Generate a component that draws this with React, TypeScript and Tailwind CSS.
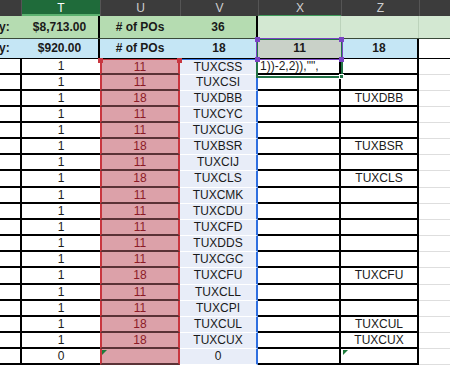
const FONT = { fontFamily: '"Liberation Sans Narrow", "Liberation Sans", Arial, sans-serif' }

type Row = { code: string; u: string; t: string; z: string }

const ROWS: Row[] = [
  { code: 'TUXCSS', u: '11', t: '1', z: '' },
  { code: 'TUXCSI', u: '11', t: '1', z: '' },
  { code: 'TUXDBB', u: '18', t: '1', z: 'TUXDBB' },
  { code: 'TUXCYC', u: '11', t: '1', z: '' },
  { code: 'TUXCUG', u: '11', t: '1', z: '' },
  { code: 'TUXBSR', u: '18', t: '1', z: 'TUXBSR' },
  { code: 'TUXCIJ', u: '11', t: '1', z: '' },
  { code: 'TUXCLS', u: '18', t: '1', z: 'TUXCLS' },
  { code: 'TUXCMK', u: '11', t: '1', z: '' },
  { code: 'TUXCDU', u: '11', t: '1', z: '' },
  { code: 'TUXCFD', u: '11', t: '1', z: '' },
  { code: 'TUXDDS', u: '11', t: '1', z: '' },
  { code: 'TUXCGC', u: '11', t: '1', z: '' },
  { code: 'TUXCFU', u: '18', t: '1', z: 'TUXCFU' },
  { code: 'TUXCLL', u: '11', t: '1', z: '' },
  { code: 'TUXCPI', u: '11', t: '1', z: '' },
  { code: 'TUXCUL', u: '18', t: '1', z: 'TUXCUL' },
  { code: 'TUXCUX', u: '18', t: '1', z: 'TUXCUX' },
  { code: '0', u: '', t: '0', z: '' },
]

function Handle({ className }: { className: string }) {
  return <div className={`absolute w-[5px] h-[5px] ${className}`} />
}

function Triangle({ className }: { className: string }) {
  return (
    <div
      className={`absolute w-0 h-0 border-t-[5px] border-r-[5px] border-t-[#1e7b3c] border-r-transparent ${className}`}
    />
  )
}

export default function App() {
  return (
    <div className="relative w-[450px] h-[368px] overflow-hidden bg-white text-[12px] text-[#1a1a1a]" style={FONT}>
      {/* column headers */}
      <div className="flex h-[16px] bg-[#3c3c3c] text-[#cfcfcf] text-[12px] leading-[16px]">
        <div className="w-[22px] border-r border-[#555]" />
        <div className="w-[78px] bg-[#1f6b3a] text-white text-center border-b-2 border-[#5cb270]">T</div>
        <div className="w-[80px] text-center border-l border-[#555]">U</div>
        <div className="w-[78px] text-center border-l border-[#555]">V</div>
        <div className="w-[83px] text-center border-l border-[#555] border-b border-b-[#3f9a5a]">X</div>
        <div className="w-[78px] text-center border-l border-[#555]">Z</div>
        <div className="flex-1 border-l border-[#555]" />
      </div>

      {/* summary row 1 */}
      <div className="flex h-[23px] font-bold leading-[22px] border-b border-[#3a4a3a]">
        <div className="flex w-[100px] bg-[#b5dcb1] border-r-2 border-black">
          <div className="w-[22px] -ml-[1px]">y:</div>
          <div className="flex-1 text-center">$8,713.00</div>
        </div>
        <div className="w-[80px] bg-[#b5dcb1] text-center">
          # of POs
        </div>
        <div className="w-[78px] bg-[#b5dcb1] text-center border-r-2 border-black">36</div>
        <div className="w-[83px] bg-[#d3e8d2] border-r border-[#bcd3bb]" />
        <div className="w-[78px] bg-[#d3e8d2] border-r border-[#bcd3bb]" />
        <div className="flex-1 bg-[#d3e8d2]" />
      </div>

      {/* summary row 2 */}
      <div className="flex h-[20px] font-bold leading-[19px] border-b border-black">
        <div className="flex w-[100px] bg-[#c5e6f5] border-r-2 border-black">
          <div className="w-[22px] -ml-[1px]">y:</div>
          <div className="flex-1 text-center">$920.00</div>
        </div>
        <div className="w-[80px] bg-[#c5e6f5] text-center"># of POs</div>
        <div className="w-[78px] bg-[#c5e6f5] text-center">18</div>
        <div className="w-[83px] bg-[#c9d1c8] text-center">11</div>
        <div className="w-[78px] bg-[#c5e6f5] text-center border-r-2 border-black">18</div>
        <div className="flex-1 bg-white" />
      </div>

      {/* data rows */}
      {ROWS.map((r, i) => (
        <div
          key={i}
          className={`flex ${i === 7 || i === 13 ? 'h-[17px] leading-[15px]' : 'h-[16px] leading-[14px]'}`}
        >
          <div className="w-[22px] border-b-2 border-r-2 border-black" />
          <div className="w-[78px] text-center border-b-2 border-black">{r.t}</div>
          <div
            className={`w-[80px] bg-[#dca1a9] text-[#8b1b27] text-center border-x-2 border-x-[#c8363f] border-b-2 border-b-[#5a3236] ${
              i === 0 ? 'border-t border-t-[#c8363f]' : ''
            }`}
          >
            {r.u}
          </div>
          <div
            className={`w-[78px] bg-[#e8edf8] text-center border-b border-b-white border-r-2 border-r-[#2f6fe0] ${
              i === 0 ? 'border-t border-t-[#2f6fe0]' : ''
            }`}
          >
            {r.code}
          </div>
          <div className="w-[83px] border-b-2 border-r-2 border-black pl-[2px] whitespace-nowrap overflow-hidden">
            {i === 0 ? '1))-2,2)),"",' : ''}
          </div>
          <div className="w-[78px] text-center border-b-2 border-r-2 border-black">{r.z}</div>
          <div className="flex-1 border-b border-[#dedede]" />
        </div>
      ))}

      {/* selection overlays */}
      <div className="absolute left-[256px] top-[38px] w-[87px] h-[40px] border-2 border-[#217346] pointer-events-none" />
      <div className="absolute left-[256px] top-[38px] w-[87px] h-[22px] border border-[#7a45c4] pointer-events-none" />
      <Handle className="left-[255px] top-[37px] bg-[#7a45c4]" />
      <Handle className="left-[339px] top-[37px] bg-[#7a45c4]" />
      <Handle className="left-[255px] top-[57px] bg-[#7a45c4]" />
      <Handle className="left-[339px] top-[57px] bg-[#7a45c4]" />
      <Handle className="left-[339px] top-[74px] bg-[#217346] border border-white" />
      <Handle className="left-[98px] top-[58px] bg-[#c8363f]" />
      <Handle className="left-[177px] top-[58px] bg-[#c8363f]" />
      <Triangle className="left-[102px] top-[350px]" />
      <Triangle className="left-[343px] top-[350px]" />
    </div>
  )
}
